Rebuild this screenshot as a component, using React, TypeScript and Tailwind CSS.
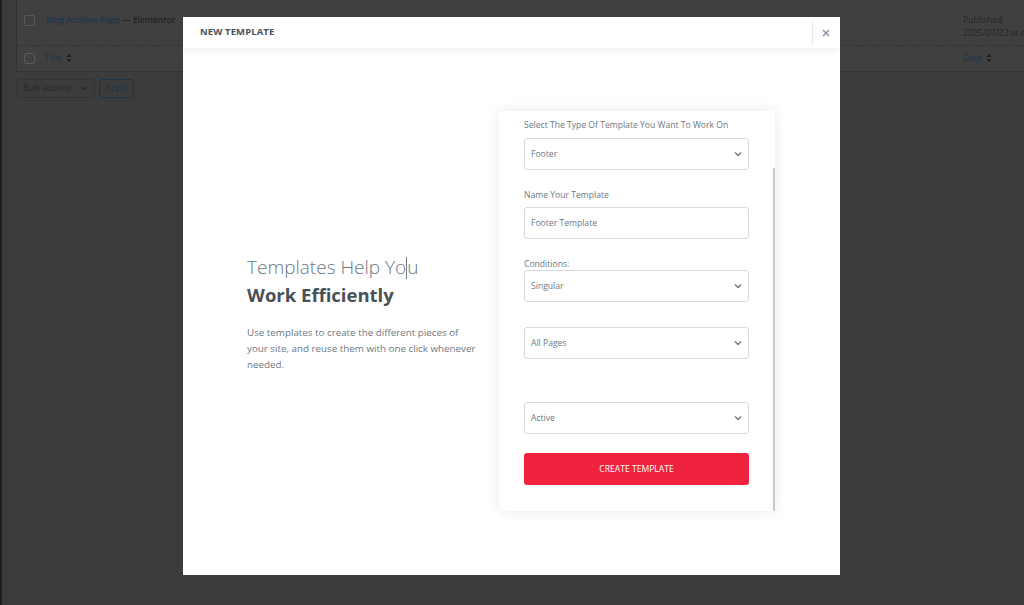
import React from 'react';

const ChevronDown = () => (
  <svg width="10" height="10" viewBox="0 0 10 10" className="text-[#6d7882]">
    <path d="M2 3.5 L5 6.5 L8 3.5" fill="none" stroke="currentColor" strokeWidth="1.4" />
  </svg>
);

const SortIcon = () => (
  <svg width="6" height="10" viewBox="0 0 6 10" className="ml-1">
    <path d="M3 0.5 L5.5 4 H0.5 Z M3 9.5 L5.5 6 H0.5 Z" fill="currentColor" />
  </svg>
);

const SelectBox = ({ value }: { value: string }) => (
  <div className="h-[32px] w-[225px] border border-[#d5dadf] rounded-[3px] flex items-center justify-between pl-[6px] pr-[5px] text-[8.6px] text-[#6d7882]">
    <span>{value}</span>
    <ChevronDown />
  </div>
);

const Label = ({ children, className = '' }: { children: React.ReactNode; className?: string }) => (
  <div className={`text-[8.6px] leading-[12px] text-[#6d7882] ${className}`}>{children}</div>
);

export default function App() {
  return (
    <div className="relative w-[1024px] h-[605px] overflow-hidden bg-[#3c3c3c] flex font-['Open_Sans',sans-serif]">
      {/* admin menu edge */}
      <div className="w-[2px] h-full bg-[#1e1e1e]" />

      {/* dimmed posts list */}
      <div className="flex-1 pl-[14px]">
        <div className="bg-[#404040] border-l border-b border-[#323232]">
          <div className="h-[46px] flex items-start pt-[14px] border-b border-dashed border-[#333]">
            <div className="w-[11px] h-[11px] border border-[#5a5a5a] rounded-[2px] ml-[7px] mt-[1px]" />
            <div className="ml-[11px] text-[8.6px] font-semibold text-[#1a344f] whitespace-nowrap">
              Blog Archive Page <span className="text-[#202020]">— Elementor</span>
            </div>
            <div className="ml-auto w-[61px] text-[8.6px] leading-[13px] text-[#242424] whitespace-nowrap overflow-hidden">
              <div>Published</div>
              <div>2025/07/22 at 4:</div>
            </div>
          </div>
          <div className="h-[25px] flex items-center">
            <div className="w-[11px] h-[11px] border border-[#5a5a5a] rounded-[2px] ml-[7px]" />
            <div className="ml-[10px] text-[8.6px] text-[#1a344f] flex items-center">
              Title <span className="text-[#202020] flex"><SortIcon /></span>
            </div>
            <div className="ml-auto w-[61px] text-[8.6px] text-[#1a344f] flex items-center">
              Date <span className="text-[#202020] flex"><SortIcon /></span>
            </div>
          </div>
        </div>
        <div className="flex gap-[4px] mt-[7px] ml-[1px]">
          <div className="h-[19px] w-[78px] border border-[#333] rounded-[3px] flex items-center justify-between px-[5px] text-[8.6px] text-[#252525]">
            Bulk actions
            <svg width="9" height="9" viewBox="0 0 10 10"><path d="M2 3.5 L5 6.5 L8 3.5" fill="none" stroke="#252525" strokeWidth="1.4" /></svg>
          </div>
          <div className="h-[19px] w-[35px] border border-[#1a344f] rounded-[3px] flex items-center justify-center text-[8.6px] text-[#1a344f]">
            Apply
          </div>
        </div>
      </div>

      {/* modal */}
      <div className="absolute left-[183px] top-[17px] w-[657px] h-[558px] bg-white flex flex-col">
        <div className="relative z-10 h-[31px] flex items-stretch shadow-[0_3px_6px_rgba(0,0,0,0.06)]">
          <div className="flex-1 flex items-center pl-[17px] text-[9.5px] font-bold text-[#495157] tracking-[0.1px]">
            NEW TEMPLATE
          </div>
          <div className="w-[27px] mt-[5px] border-l border-[#e6e9ec] flex items-center justify-center -translate-y-[2px] -translate-x-[1px]">
            <svg width="8" height="8" viewBox="0 0 8 8">
              <path d="M1 1 L7 7 M7 1 L1 7" stroke="#7d8fa5" strokeWidth="1.3" />
            </svg>
          </div>
        </div>

        <div className="flex-1 flex items-start pl-[64px]">
          <div className="w-[252px] mt-[206px]">
            <div className="text-[19px] leading-[27px] font-light text-[#6d7882] whitespace-nowrap">
              Templates Help Yo<span className="inline-block w-px h-[22px] bg-[#6d7882] align-[-5px]" />u
            </div>
            <div className="text-[18.5px] leading-[27px] font-bold text-[#495157]">Work Efficiently</div>
            <p className="mt-[17px] w-[231px] text-[9.8px] leading-[16px] text-[#6d7882]">
              Use templates to create the different pieces of your site, and reuse them with one click whenever needed.
            </p>
          </div>

          <div className="relative mt-[63px] w-[276px] h-[400px] bg-white shadow-[0_0_12px_rgba(0,0,0,0.09)] pl-[25px] pt-[8px]">
            <div className="absolute right-0 top-[57px] bottom-0 w-[2px] bg-[#c9c9c9]" />
            <Label>Select The Type Of Template You Want To Work On</Label>
            <div className="mt-[7px]"><SelectBox value="Footer" /></div>
            <Label className="mt-[19px]">Name Your Template</Label>
            <div className="mt-[6px] h-[32px] w-[225px] border border-[#d5dadf] rounded-[3px] flex items-center pl-[6px] text-[8.6px] text-[#6d7882]">
              Footer Template
            </div>
            <Label className="mt-[19px]">Conditions:</Label>
            <div><SelectBox value="Singular" /></div>
            <div className="mt-[25px]"><SelectBox value="All Pages" /></div>
            <div className="mt-[43px]"><SelectBox value="Active" /></div>
            <div className="mt-[19px] h-[32px] w-[225px] rounded-[3px] bg-[#f0233f] flex items-center justify-center text-[8.6px] text-white">
              CREATE TEMPLATE
            </div>
          </div>
        </div>
      </div>
    </div>
  );
}
